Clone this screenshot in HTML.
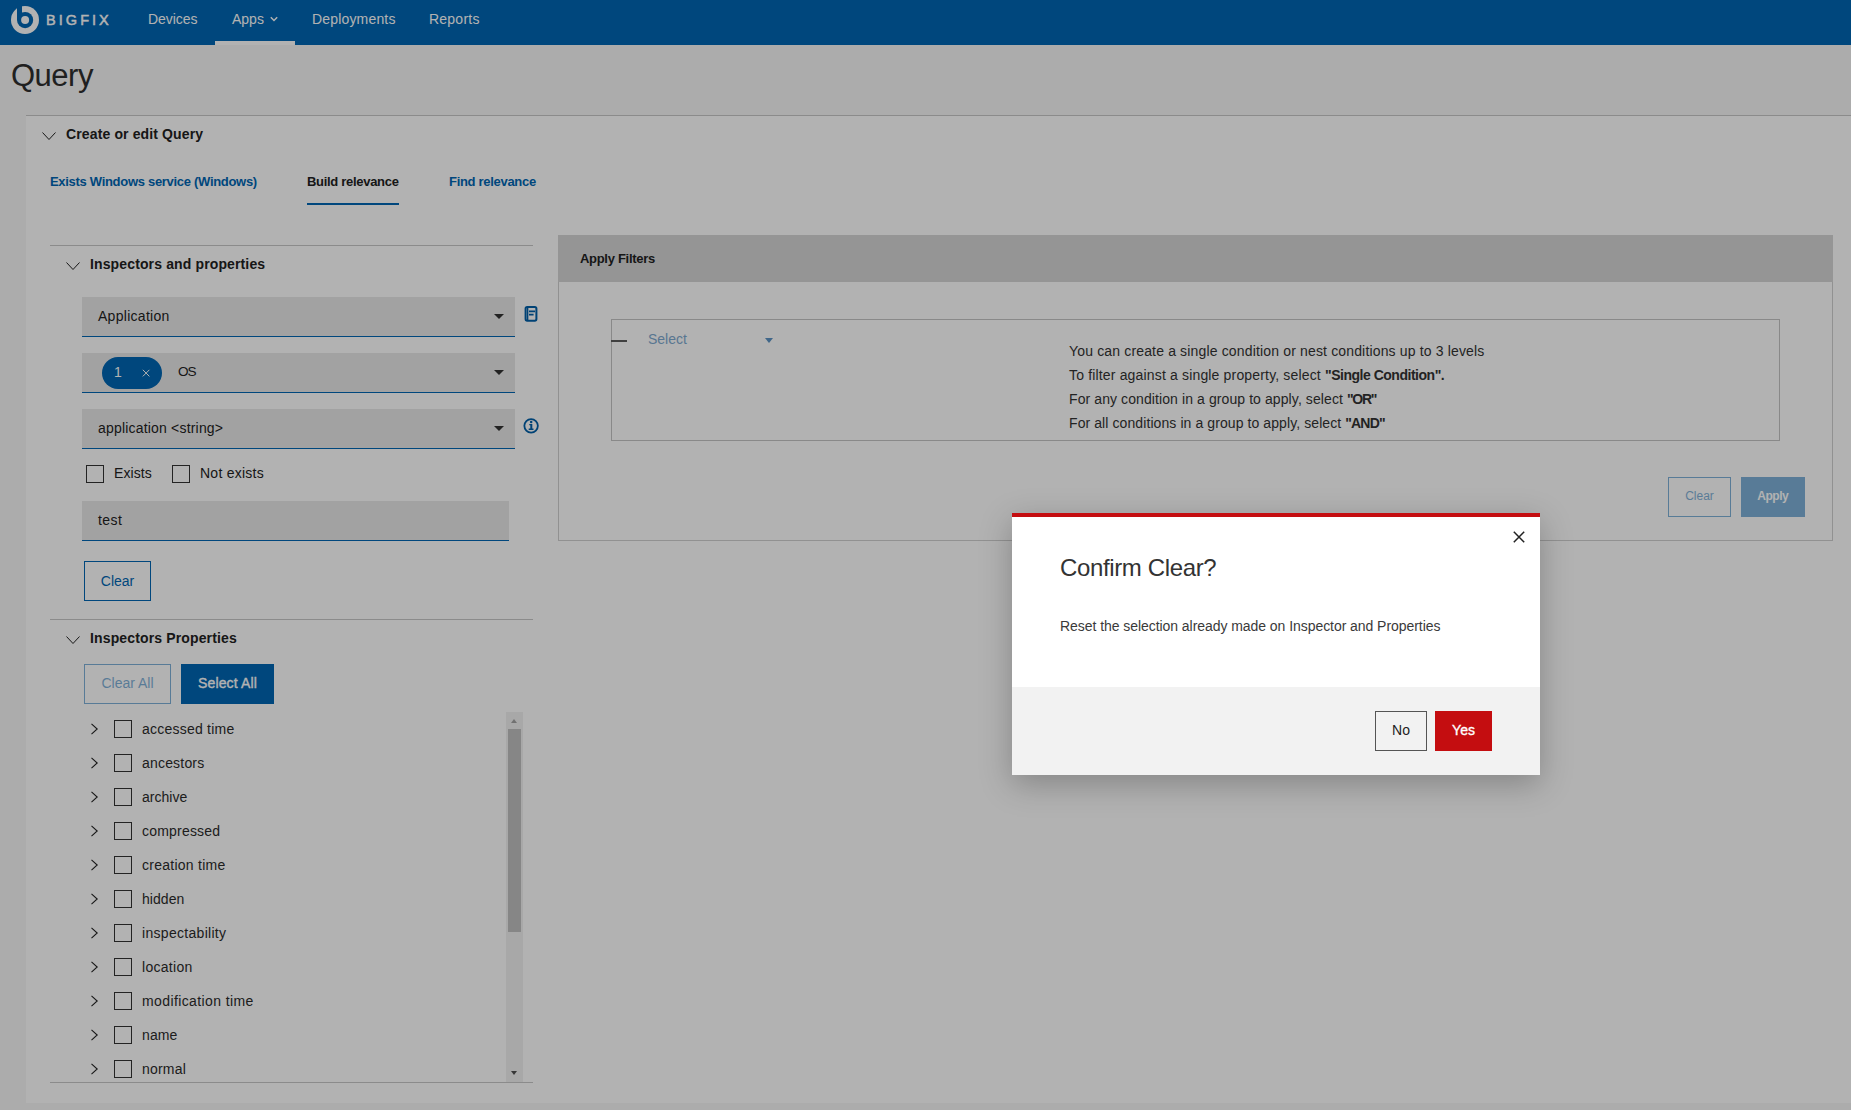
<!DOCTYPE html>
<html lang="en">
<head>
<meta charset="utf-8">
<title>Query</title>
<style>
*{box-sizing:border-box;margin:0;padding:0}
html,body{width:1851px;height:1110px;overflow:hidden}
body{font-family:"Liberation Sans",Arial,sans-serif;font-size:14px;color:#222;background:#f6f6f6;position:relative}
.abs,.t{position:absolute;white-space:nowrap}
.t{line-height:20px;font-size:14px}
.b{font-weight:bold}
.blue{color:#0066b3}
/* nav */
#nav{position:absolute;left:0;top:0;width:1851px;height:45px;background:#0066b3}
#nav .t{color:#fff;font-size:14px}
#nav .active{position:absolute;left:215px;top:41px;width:80px;height:4px;background:#fff}
/* page */
#panel{position:absolute;left:26px;top:115px;width:1825px;height:988px;background:#fff;border-top:1px solid #c8c8c8}
.hr{position:absolute;height:1px;background:#c8c8c8}
.sel{position:absolute;left:82px;width:433px;height:40px;background:#e9e9e9;border-bottom:1px solid #0066b3}
.caret{position:absolute;width:0;height:0;border-left:5px solid transparent;border-right:5px solid transparent;border-top:5px solid #333}
.cb{position:absolute;width:18px;height:18px;border:1px solid #333;background:transparent}
.btn{position:absolute;height:40px;border:1px solid #0066b3;color:#0066b3;font-size:14px;line-height:38px;text-align:center;background:transparent}
.btn.fill{background:#0066b3;color:#fff}
.btn.dis{opacity:.5}
.med{-webkit-text-stroke:0.35px currentColor}
.row{position:absolute;left:84px;width:420px;height:34px}
.row svg{position:absolute;left:6px;top:11px}
.row .cb{left:30px;top:8px}
.row .t{left:58px;top:7px;color:#2b2b2b}
/* overlay + modal */
#ov{position:absolute;left:0;top:0;width:1851px;height:1110px;background:rgba(0,0,0,.3)}
#modal{position:absolute;left:1012px;top:513px;width:528px;height:262px;background:#fff;border-top:4px solid #c40d10;box-shadow:0 9px 30px rgba(0,0,0,.25)}
#modal .foot{position:absolute;left:0;top:170px;width:528px;height:88px;background:#f2f2f2}
</style>
</head>
<body>
<!-- NAV -->
<div id="nav">
  <svg class="abs" style="left:10px;top:5px" width="30" height="30" viewBox="0 0 30 30">
    <circle cx="15" cy="15" r="14" fill="#fff"/>
    <circle cx="15.1" cy="15.1" r="8.1" fill="#0066b3"/>
    <rect x="7" y="0" width="5" height="15" fill="#0066b3"/>
    <circle cx="15.1" cy="15.1" r="4" fill="#fff"/>
  </svg>
  <div class="t" id="brand" style="left:46px;top:10px;font-size:14.5px;letter-spacing:3.05px;-webkit-text-stroke:0.45px #fff">BIGFIX</div>
  <div class="t" id="n1" style="left:148px;top:9px;letter-spacing:-0.057px">Devices</div>
  <div class="t" id="n2" style="left:232px;top:9px">Apps</div>
  <svg class="abs" style="left:269px;top:15px" width="10" height="8" viewBox="0 0 10 8"><path d="M1.8 2.3 L5 5.5 L8.2 2.3" fill="none" stroke="#fff" stroke-width="1.5"/></svg>
  <div class="t" id="n3" style="left:312px;top:9px;letter-spacing:0.173px">Deployments</div>
  <div class="t" id="n4" style="left:429px;top:9px;letter-spacing:0.229px">Reports</div>
  <div class="active"></div>
</div>

<!-- TITLE -->
<div class="t" id="title" style="left:11px;top:56px;font-size:31px;line-height:40px;color:#2e2e2e;letter-spacing:-0.5px">Query</div>

<!-- PANEL -->
<div id="panel"></div>

<svg class="abs" style="left:41px;top:131px" width="16" height="10" viewBox="0 0 16 10"><path d="M1.5 1.5 L8 8.5 L14.5 1.5" fill="none" stroke="#222" stroke-width="1"/></svg>
<div class="t b" id="h1" style="left:66px;top:124px;letter-spacing:0.130px">Create or edit Query</div>

<div class="t b blue" id="tab1" style="left:50px;top:172px;font-size:13px;letter-spacing:-0.3px">Exists Windows service (Windows)</div>
<div class="t b" id="tab2" style="left:307px;top:172px;font-size:13px;letter-spacing:-0.3px">Build relevance</div>
<div class="abs" style="left:307px;top:203px;width:92px;height:2px;background:#0066b3"></div>
<div class="t b blue" id="tab3" style="left:449px;top:172px;font-size:13px;letter-spacing:-0.3px">Find relevance</div>

<!-- LEFT COLUMN -->
<div class="hr" style="left:50px;top:245px;width:483px"></div>
<svg class="abs" style="left:65px;top:261px" width="16" height="10" viewBox="0 0 16 10"><path d="M1.5 1.5 L8 8.5 L14.5 1.5" fill="none" stroke="#222" stroke-width="1"/></svg>
<div class="t b" id="h2" style="left:90px;top:254px;letter-spacing:0.132px">Inspectors and properties</div>

<div class="sel" style="top:297px"><div class="t" id="s1" style="left:16px;top:9px;letter-spacing:0.282px">Application</div><div class="caret" style="left:412px;top:17px"></div></div>
<svg class="abs" style="left:524px;top:306px" width="14" height="16" viewBox="0 0 14 16">
  <rect x="1.6" y="1" width="10.8" height="13.7" rx="1.6" fill="none" stroke="#005fa8" stroke-width="2"/>
  <path d="M3.6 1 V14.7" fill="none" stroke="#005fa8" stroke-width="1.5"/>
  <path d="M5 5.4 H11 M5 8.6 H9.6" fill="none" stroke="#005fa8" stroke-width="1.6"/>
</svg>

<div class="sel" style="top:353px">
  <div class="abs" style="left:20px;top:4px;width:60px;height:32px;border-radius:16px;background:#0066b3"></div>
  <div class="t" style="left:32px;top:9px;color:#fff">1</div>
  <svg class="abs" style="left:59px;top:15px" width="10" height="10" viewBox="0 0 10 10"><path d="M1.8 1.8 L8.4 8.4 M8.4 1.8 L1.8 8.4" stroke="#fff" stroke-width="1" fill="none"/></svg>
  <div class="t" id="s2" style="left:96px;top:9px;font-size:13.6px;letter-spacing:-1px">OS</div>
  <div class="caret" style="left:412px;top:17px"></div>
</div>

<div class="sel" style="top:409px"><div class="t" id="s3" style="left:16px;top:9px;letter-spacing:0.190px">application &lt;string&gt;</div><div class="caret" style="left:412px;top:17px"></div></div>
<svg class="abs" style="left:523px;top:418px" width="16" height="16" viewBox="0 0 16 16">
  <circle cx="8.1" cy="7.8" r="6.75" fill="none" stroke="#005fa8" stroke-width="1.8"/>
  <circle cx="8.2" cy="4" r="1.25" fill="#005fa8"/>
  <path d="M6.3 6 H9.3 V10.6 H10.5 V11.9 H5.7 V10.6 H7.3 V7.2 H6.3 Z" fill="#005fa8"/>
</svg>

<div class="cb" style="left:86px;top:465px"></div>
<div class="t" id="c1" style="left:114px;top:463px;letter-spacing:0.083px">Exists</div>
<div class="cb" style="left:172px;top:465px"></div>
<div class="t" id="c2" style="left:200px;top:463px;letter-spacing:0.250px">Not exists</div>

<div class="sel" style="top:501px;width:427px"><div class="t" id="s4" style="left:16px;top:9px;letter-spacing:0.450px">test</div></div>

<div class="btn" style="left:84px;top:561px;width:67px">Clear</div>

<div class="hr" style="left:50px;top:619px;width:483px"></div>
<svg class="abs" style="left:65px;top:635px" width="16" height="10" viewBox="0 0 16 10"><path d="M1.5 1.5 L8 8.5 L14.5 1.5" fill="none" stroke="#222" stroke-width="1"/></svg>
<div class="t b" id="h3" style="left:90px;top:628px;letter-spacing:0.138px">Inspectors Properties</div>

<div class="btn dis" style="left:84px;top:664px;width:87px;line-height:36px">Clear All</div>
<div class="btn fill med" style="left:181px;top:664px;width:93px;line-height:36px;letter-spacing:0.15px">Select All</div>

<!-- TREE -->
<div id="tree">
<div class="row" style="top:712px"><svg width="9" height="12" viewBox="0 0 9 12"><path d="M1.5 0.8 L7.2 6 L1.5 11.2" fill="none" stroke="#222" stroke-width="1.1"/></svg><div class="cb"></div><div class="t" style="letter-spacing:0.23px">accessed time</div></div>
<div class="row" style="top:746px"><svg width="9" height="12" viewBox="0 0 9 12"><path d="M1.5 0.8 L7.2 6 L1.5 11.2" fill="none" stroke="#222" stroke-width="1.1"/></svg><div class="cb"></div><div class="t" style="letter-spacing:0.19px">ancestors</div></div>
<div class="row" style="top:780px"><svg width="9" height="12" viewBox="0 0 9 12"><path d="M1.5 0.8 L7.2 6 L1.5 11.2" fill="none" stroke="#222" stroke-width="1.1"/></svg><div class="cb"></div><div class="t" style="letter-spacing:0.03px">archive</div></div>
<div class="row" style="top:814px"><svg width="9" height="12" viewBox="0 0 9 12"><path d="M1.5 0.8 L7.2 6 L1.5 11.2" fill="none" stroke="#222" stroke-width="1.1"/></svg><div class="cb"></div><div class="t" style="letter-spacing:0.20px">compressed</div></div>
<div class="row" style="top:848px"><svg width="9" height="12" viewBox="0 0 9 12"><path d="M1.5 0.8 L7.2 6 L1.5 11.2" fill="none" stroke="#222" stroke-width="1.1"/></svg><div class="cb"></div><div class="t" style="letter-spacing:0.26px">creation time</div></div>
<div class="row" style="top:882px"><svg width="9" height="12" viewBox="0 0 9 12"><path d="M1.5 0.8 L7.2 6 L1.5 11.2" fill="none" stroke="#222" stroke-width="1.1"/></svg><div class="cb"></div><div class="t" style="letter-spacing:0.05px">hidden</div></div>
<div class="row" style="top:916px"><svg width="9" height="12" viewBox="0 0 9 12"><path d="M1.5 0.8 L7.2 6 L1.5 11.2" fill="none" stroke="#222" stroke-width="1.1"/></svg><div class="cb"></div><div class="t" style="letter-spacing:0.30px">inspectability</div></div>
<div class="row" style="top:950px"><svg width="9" height="12" viewBox="0 0 9 12"><path d="M1.5 0.8 L7.2 6 L1.5 11.2" fill="none" stroke="#222" stroke-width="1.1"/></svg><div class="cb"></div><div class="t" style="letter-spacing:0.29px">location</div></div>
<div class="row" style="top:984px"><svg width="9" height="12" viewBox="0 0 9 12"><path d="M1.5 0.8 L7.2 6 L1.5 11.2" fill="none" stroke="#222" stroke-width="1.1"/></svg><div class="cb"></div><div class="t" style="letter-spacing:0.39px">modification time</div></div>
<div class="row" style="top:1018px"><svg width="9" height="12" viewBox="0 0 9 12"><path d="M1.5 0.8 L7.2 6 L1.5 11.2" fill="none" stroke="#222" stroke-width="1.1"/></svg><div class="cb"></div><div class="t" style="letter-spacing:0.10px">name</div></div>
<div class="row" style="top:1052px"><svg width="9" height="12" viewBox="0 0 9 12"><path d="M1.5 0.8 L7.2 6 L1.5 11.2" fill="none" stroke="#222" stroke-width="1.1"/></svg><div class="cb"></div><div class="t" style="letter-spacing:0.20px">normal</div></div>
</div>
<!-- scrollbar -->
<div class="abs" style="left:506px;top:712px;width:17px;height:370px;background:#f1f1f1"></div>
<div class="abs" style="left:508px;top:729px;width:13px;height:203px;background:#c1c1c1"></div>
<div class="abs" style="left:511px;top:719px;width:0;height:0;border-left:3.5px solid transparent;border-right:3.5px solid transparent;border-bottom:4px solid #a3a3a3"></div>
<div class="abs" style="left:511px;top:1071px;width:0;height:0;border-left:3.5px solid transparent;border-right:3.5px solid transparent;border-top:4px solid #505050"></div>
<div class="hr" style="left:50px;top:1082px;width:483px"></div>

<!-- RIGHT PANEL -->
<div class="abs" style="left:558px;top:235px;width:1275px;height:47px;background:#d6d6d6"></div>
<div class="t b" id="af" style="left:580px;top:249px;font-size:13px;letter-spacing:-0.3px">Apply Filters</div>
<div class="abs" style="left:558px;top:282px;width:1275px;height:259px;border:1px solid #d0d0d0;border-top:none"></div>
<div class="abs" style="left:611px;top:319px;width:1169px;height:122px;border:1px solid #c4c4c4"></div>
<div class="abs" style="left:611px;top:340px;width:16px;height:2px;background:#5c5c5c"></div>
<div class="t" id="selx" style="left:648px;top:329px;color:#7faad0">Select</div>
<div class="caret" style="left:765px;top:338px;border-top-color:#5c93c4;border-left-width:4px;border-right-width:4px;border-top-width:5px"></div>
<div class="t" style="left:1069px;top:341px;color:#333"><span id="l1r" style="letter-spacing:0.157px">You can create a single condition or nest conditions up to 3 levels</span></div>
<div class="t" style="left:1069px;top:365px;color:#333"><span id="l2r" style="letter-spacing:0.164px">To filter against a single property, select </span><b id="l2b" style="letter-spacing:-0.480px">"Single Condition".</b></div>
<div class="t" style="left:1069px;top:389px;color:#333"><span id="l3r" style="letter-spacing:0.093px">For any condition in a group to apply, select </span><b id="l3b" style="letter-spacing:-1.300px">"OR"</b></div>
<div class="t" style="left:1069px;top:413px;color:#333"><span id="l4r" style="letter-spacing:0.088px">For all conditions in a group to apply, select </span><b id="l4b" style="letter-spacing:-0.820px">"AND"</b></div>
<div class="btn dis" style="left:1668px;top:477px;width:63px;font-size:12px;line-height:36px">Clear</div>
<div class="btn fill dis" style="left:1741px;top:477px;width:64px;font-size:12px;font-weight:bold;line-height:36px;letter-spacing:-0.5px;text-indent:-0.5px">Apply</div>

<!-- OVERLAY -->
<div id="ov"></div>

<!-- MODAL -->
<div id="modal">
  <svg class="abs" style="left:500px;top:13px" width="14" height="14" viewBox="0 0 14 14"><path d="M1.8 1.8 L12.2 12.2 M12.2 1.8 L1.8 12.2" stroke="#222" stroke-width="1.5" fill="none"/></svg>
  <div class="t" id="mt" style="left:48px;top:35px;font-size:24px;line-height:32px;color:#333;letter-spacing:-0.36px">Confirm Clear?</div>
  <div class="t" id="mb" style="left:48px;top:99px;color:#3a3a3a;letter-spacing:-0.055px">Reset the selection already made on Inspector and Properties</div>
  <div class="foot"></div>
  <div class="btn" style="left:363px;top:194px;width:52px;border-color:#555;color:#222;line-height:36px">No</div>
  <div class="btn med" style="left:423px;top:194px;width:57px;border-color:#c40d10;color:#fff;background:#c40d10;line-height:36px">Yes</div>
</div>
</body>
</html>
